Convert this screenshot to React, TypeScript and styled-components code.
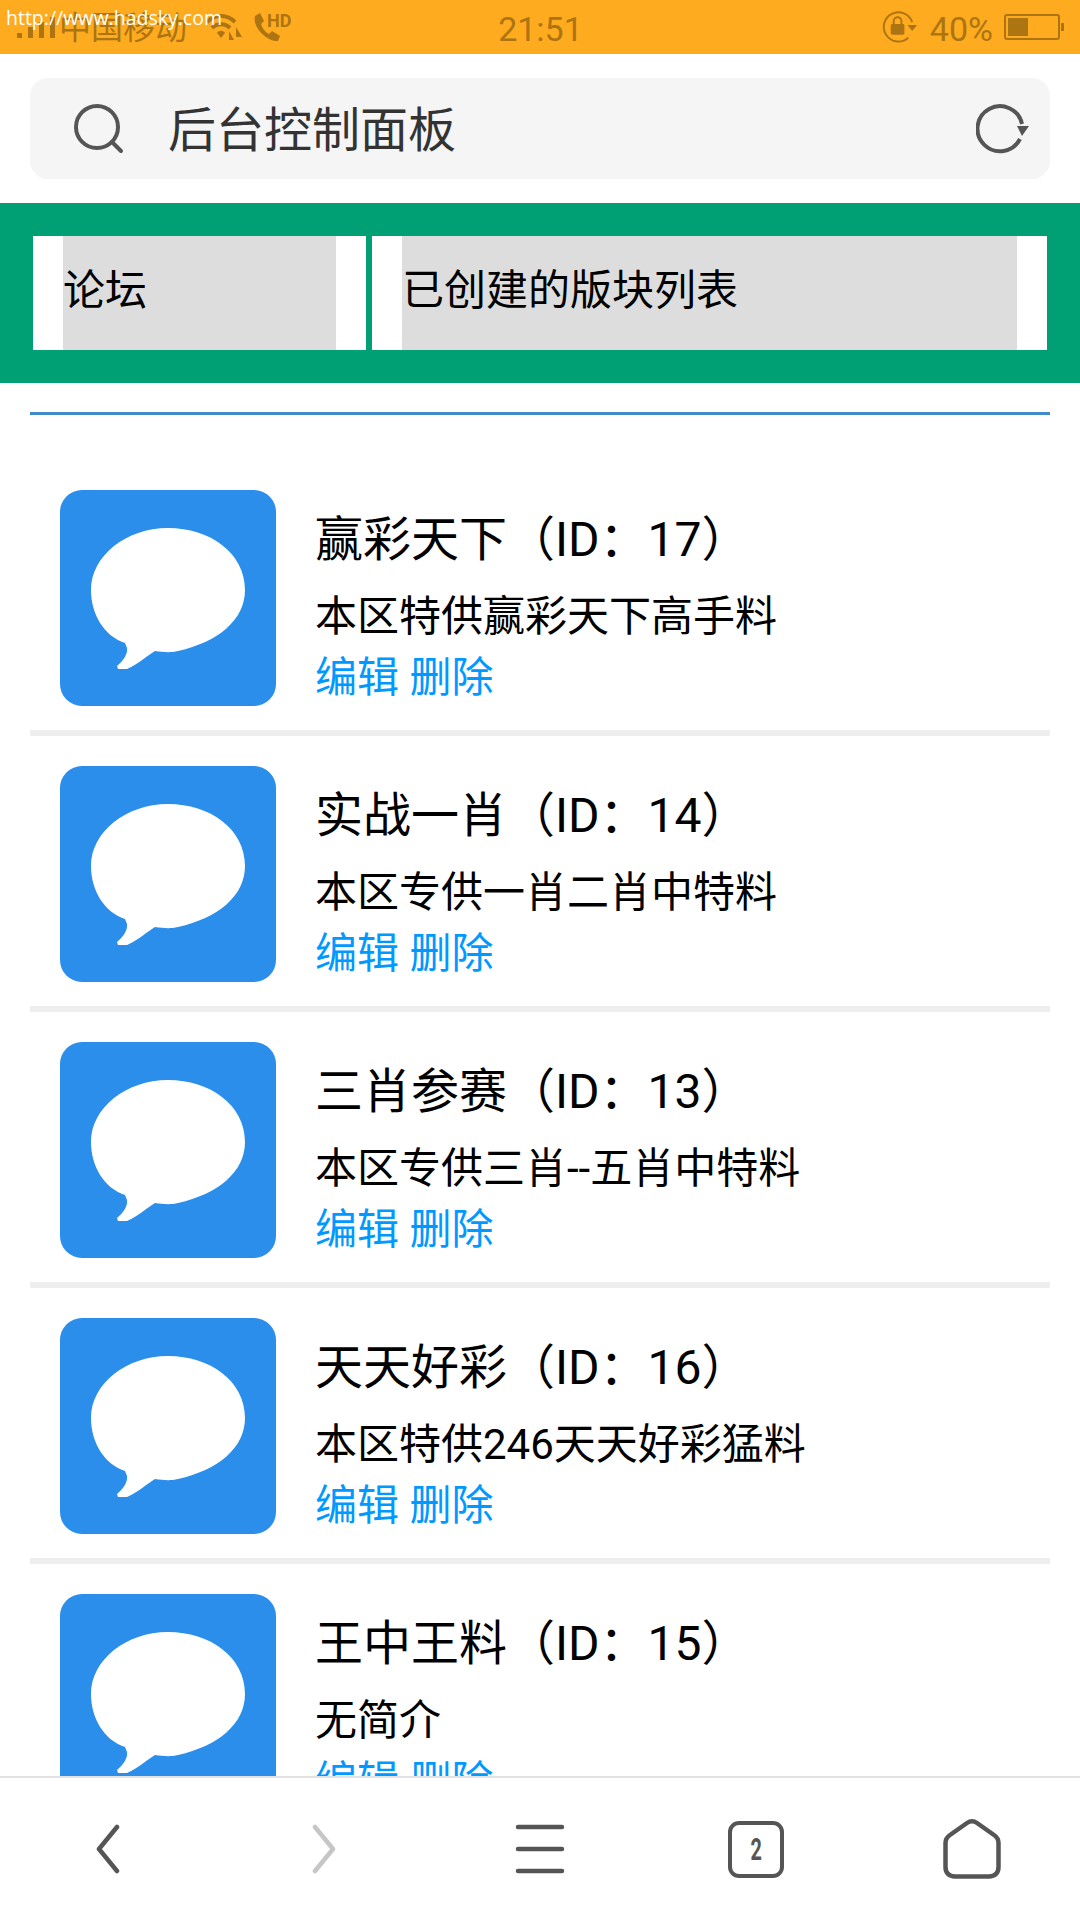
import React from 'react';
import styled, { createGlobalStyle } from 'styled-components';

type Board = {
  name: string;
  id: number;
  intro: string;
};

const boards: Board[] = [
  { name: '赢彩天下', id: 17, intro: '本区特供赢彩天下高手料' },
  { name: '实战一肖', id: 14, intro: '本区专供一肖二肖中特料' },
  { name: '三肖参赛', id: 13, intro: '本区专供三肖--五肖中特料' },
  { name: '天天好彩', id: 16, intro: '本区特供246天天好彩猛料' },
  { name: '王中王料', id: 15, intro: '无简介' },
];

const statusInk = '#ad7412';
const navInk = '#555555';

const GlobalStyle = createGlobalStyle`
  html, body {
    margin: 0;
    padding: 0;
    background: #fff;
  }

  * {
    box-sizing: border-box;
  }
`;

const BubbleIcon = () => (
  <BubbleSvg viewBox="0 0 216 216">
    <path
      fill="#fff"
      d="M108 38C150 38 185 63 185 100C185 130 158 152 118 161C110 163 103 162 95 161C88 165 80 173 67 179L58 179L57 176C63 171 68 164 67 158L65 153C44 146 31 124 31 100C31 66 66 38 108 38Z"
    />
  </BubbleSvg>
);

const BoardRow = ({ board }: { board: Board }) => (
  <Row>
    <BoardIcon>
      <BubbleIcon />
    </BoardIcon>
    <BoardInfo>
      <BoardTitle>
        {board.name}（ID：{board.id}）
      </BoardTitle>
      <BoardIntro>{board.intro}</BoardIntro>
      <BoardActions>
        <ActionLink>编辑</ActionLink> <ActionLink>删除</ActionLink>
      </BoardActions>
    </BoardInfo>
  </Row>
);

const StatusBar = () => (
  <StatusWrap>
    <SiteUrl>http://www.hadsky.com</SiteUrl>
    <StatusLeft>
      <svg width="38" height="24" viewBox="0 0 38 24">
        <rect x="0" y="18" width="5" height="5" fill={statusInk} />
        <rect x="11" y="12" width="5" height="11" fill={statusInk} />
        <rect x="22" y="7" width="5" height="16" fill={statusInk} />
        <rect x="33" y="2" width="5" height="21" fill={statusInk} />
      </svg>
      <Carrier>中国移动</Carrier>
      <WifiIcon width="36" height="28" viewBox="0 0 36 28">
        <path d="M1 9C9 1 21 1 29 9M6 15C11 10 19 10 24 15" fill="none" stroke={statusInk} strokeWidth="4" />
        <path d="M11 20C13 17 17 17 19 20L15 25Z" fill={statusInk} />
        <path d="M23 27L23 18L28 27ZM30 14L30 24L36 24Z" fill={statusInk} />
      </WifiIcon>
      <svg width="42" height="30" viewBox="0 0 42 30">
        <path
          d="M2 4L7 1L11 9L8 12C9 16 12 20 16 22L19 19L27 24L25 29C14 30 -1 15 2 4Z"
          fill={statusInk}
        />
        <text x="14" y="15" fontSize="18" fontWeight="700" fontFamily="Roboto, sans-serif" fill={statusInk}>
          HD
        </text>
      </svg>
    </StatusLeft>
    <Clock>21:51</Clock>
    <StatusRight>
      <svg width="37" height="34" viewBox="0 0 38 34">
        <path d="M31 12A15 15 0 1 0 27 28" fill="none" stroke={statusInk} strokeWidth="2" />
        <path d="M26 15L36 15L31 21Z" fill={statusInk} />
        <rect x="9" y="14" width="14" height="11" rx="1.500" fill={statusInk} />
        <path d="M12 14V11A4 4 0 0 1 20 11V14" fill="none" stroke={statusInk} strokeWidth="2" />
      </svg>
      <BatteryLevel>40%</BatteryLevel>
      <svg width="60" height="26" viewBox="0 0 60 26">
        <rect x="1" y="1" width="54" height="24" rx="2" fill="none" stroke={statusInk} strokeWidth="2" />
        <rect x="4" y="4" width="20" height="18" fill={statusInk} />
        <rect x="57" y="9" width="3" height="8" fill={statusInk} />
      </svg>
    </StatusRight>
  </StatusWrap>
);

const AddressBar = () => (
  <AddressWrap>
    <AddressField>
      <svg width="50" height="50" viewBox="0 0 50 50">
        <circle cx="23" cy="23" r="21" fill="none" stroke={navInk} strokeWidth="4" />
        <path d="M38 38L47 47" fill="none" stroke={navInk} strokeWidth="4" strokeLinecap="round" />
      </svg>
      <AddressText>后台控制面板</AddressText>
      <svg width="54" height="50" viewBox="0 0 54 50">
        <path d="M44 35A22.500 22.500 0 1 1 46 20" fill="none" stroke={navInk} strokeWidth="4" />
        <path d="M41 22L53 22L46 32Z" fill={navInk} />
      </svg>
    </AddressField>
  </AddressWrap>
);

const BottomNav = () => (
  <NavBar>
    <NavSlot>
      <svg width="24" height="50" viewBox="0 0 24 50">
        <path d="M21 3L3 25L21 47" fill="none" stroke={navInk} strokeWidth="4.500" strokeLinecap="round" strokeLinejoin="round" />
      </svg>
    </NavSlot>
    <NavSlot>
      <svg width="24" height="50" viewBox="0 0 24 50">
        <path d="M3 3L21 25L3 47" fill="none" stroke="#c6c6c6" strokeWidth="4.500" strokeLinecap="round" strokeLinejoin="round" />
      </svg>
    </NavSlot>
    <NavSlot>
      <svg width="50" height="50" viewBox="0 0 50 50">
        <path d="M3 3H47M3 25H47M3 47H47" fill="none" stroke={navInk} strokeWidth="4.500" strokeLinecap="round" />
      </svg>
    </NavSlot>
    <NavSlot>
      <TabCount>
        <TabDigit>2</TabDigit>
      </TabCount>
    </NavSlot>
    <NavSlot>
      <svg width="58" height="60" viewBox="0 0 58 60">
        <path
          d="M24 4C27 2 31 2 34 4L51 16C54 18 55.500 21 55.500 24V48C55.500 54 52 57.500 46 57.500H12C6 57.500 2.500 54 2.500 48V24C2.500 21 4 18 7 16Z"
          fill="none"
          stroke={navInk}
          strokeWidth="4.500"
        />
      </svg>
    </NavSlot>
  </NavBar>
);

const App = () => (
  <Screen>
    <GlobalStyle />
    <StatusBar />
    <AddressBar />
    <Content>
      <TabPanel>
        <TabItem>
          <TabLabel>论坛</TabLabel>
        </TabItem>
        <TabItem>
          <TabLabel>已创建的版块列表</TabLabel>
        </TabItem>
      </TabPanel>
      <Divider />
      <BoardList>
        {boards.map((board) => (
          <BoardRow key={board.id} board={board} />
        ))}
      </BoardList>
    </Content>
    <BottomNav />
  </Screen>
);

const Screen = styled.div`
  width: 1080px;
  height: 1920px;
  display: flex;
  flex-direction: column;
  overflow: hidden;
  background: #fff;
  color: #000;
  font-family: Roboto, 'Noto Sans CJK SC', sans-serif;
`;

const StatusWrap = styled.div`
  position: relative;
  flex: 0 0 54px;
  height: 54px;
  display: flex;
  align-items: center;
  justify-content: space-between;
  padding: 0 16px 0 17px;
  background: #ffab1f;
  color: ${statusInk};
`;

const SiteUrl = styled.span`
  position: absolute;
  left: 6px;
  top: 5px;
  font-size: 19.5px;
  line-height: 26px;
  color: #fff;
  font-family: 'Open Sans', sans-serif;
`;

const StatusLeft = styled.div`
  display: flex;
  align-items: center;
  gap: 7px;
  width: 300px;
`;

const Carrier = styled.span`
  font-size: 32px;
  line-height: 40px;
  padding-top: 2px;
  margin: 0 12px 0 -3px;
  white-space: nowrap;
`;

const WifiIcon = styled.svg`
  margin-right: 4px;
`;

const Clock = styled.span`
  font-size: 34px;
  line-height: 46px;
  padding-top: 4px;
`;

const StatusRight = styled.div`
  display: flex;
  align-items: center;
  justify-content: flex-end;
  gap: 11px;
  width: 300px;
`;

const BatteryLevel = styled.span`
  font-size: 34px;
  line-height: 46px;
  padding-top: 3px;
`;

const AddressWrap = styled.div`
  flex: 0 0 149px;
  padding: 24px 30px;
`;

const AddressField = styled.div`
  height: 101px;
  display: flex;
  align-items: center;
  padding: 0 20px 0 44px;
  border-radius: 18px;
  background: #f5f5f5;
`;

const AddressText = styled.span`
  flex: 1;
  margin-left: 44px;
  padding-top: 4px;
  font-size: 48px;
  line-height: 60px;
  color: #333;
`;

const Content = styled.div`
  flex: 1;
  min-height: 0;
  overflow: hidden;
`;

const TabPanel = styled.div`
  display: grid;
  grid-template-columns: 333px 1fr;
  gap: 6px;
  height: 180px;
  padding: 33px;
  background: #009f74;
`;

const TabItem = styled.div`
  padding: 0 30px;
  background: #fff;
`;

const TabLabel = styled.div`
  height: 100%;
  font-size: 42px;
  line-height: 110px;
  background: #ddd;
`;

const Divider = styled.div`
  height: 3px;
  margin: 29px 30px 0;
  background: #428bca;
`;

const BoardList = styled.div`
  margin: 45px 30px 0;
`;

const Row = styled.div`
  display: flex;
  gap: 39px;
  padding: 30px 0 24px 30px;
  border-bottom: 6px solid #eee;
`;

const BoardIcon = styled.div`
  flex: 0 0 216px;
  height: 216px;
  border-radius: 22px;
  background: #2b8eeb;
`;

const BubbleSvg = styled.svg`
  display: block;
  width: 100%;
  height: 100%;
`;

const BoardInfo = styled.div`
  min-width: 0;
  height: 216px;
  padding-top: 12px;
`;

const BoardTitle = styled.div`
  font-size: 48px;
  line-height: 76px;
  margin-bottom: 9px;
`;

const BoardIntro = styled.div`
  font-size: 42px;
  line-height: 60px;
  margin-bottom: 1px;
`;

const BoardActions = styled.div`
  font-size: 42px;
  line-height: 60px;
`;

const ActionLink = styled.span`
  color: #09f;
`;

const NavBar = styled.div`
  flex: 0 0 144px;
  display: grid;
  grid-template-columns: repeat(5, 1fr);
  border-top: 2px solid #e2e2e2;
  background: #fff;
`;

const NavSlot = styled.div`
  display: flex;
  align-items: center;
  justify-content: center;
`;

const TabCount = styled.div`
  width: 56px;
  height: 57px;
  display: flex;
  align-items: center;
  justify-content: center;
  border: 4.5px solid ${navInk};
  border-radius: 11px;
  color: ${navInk};
`;

const TabDigit = styled.span`
  font-size: 32px;
  line-height: 32px;
  font-weight: 700;
  transform: scaleX(0.62);
`;

export default App;
